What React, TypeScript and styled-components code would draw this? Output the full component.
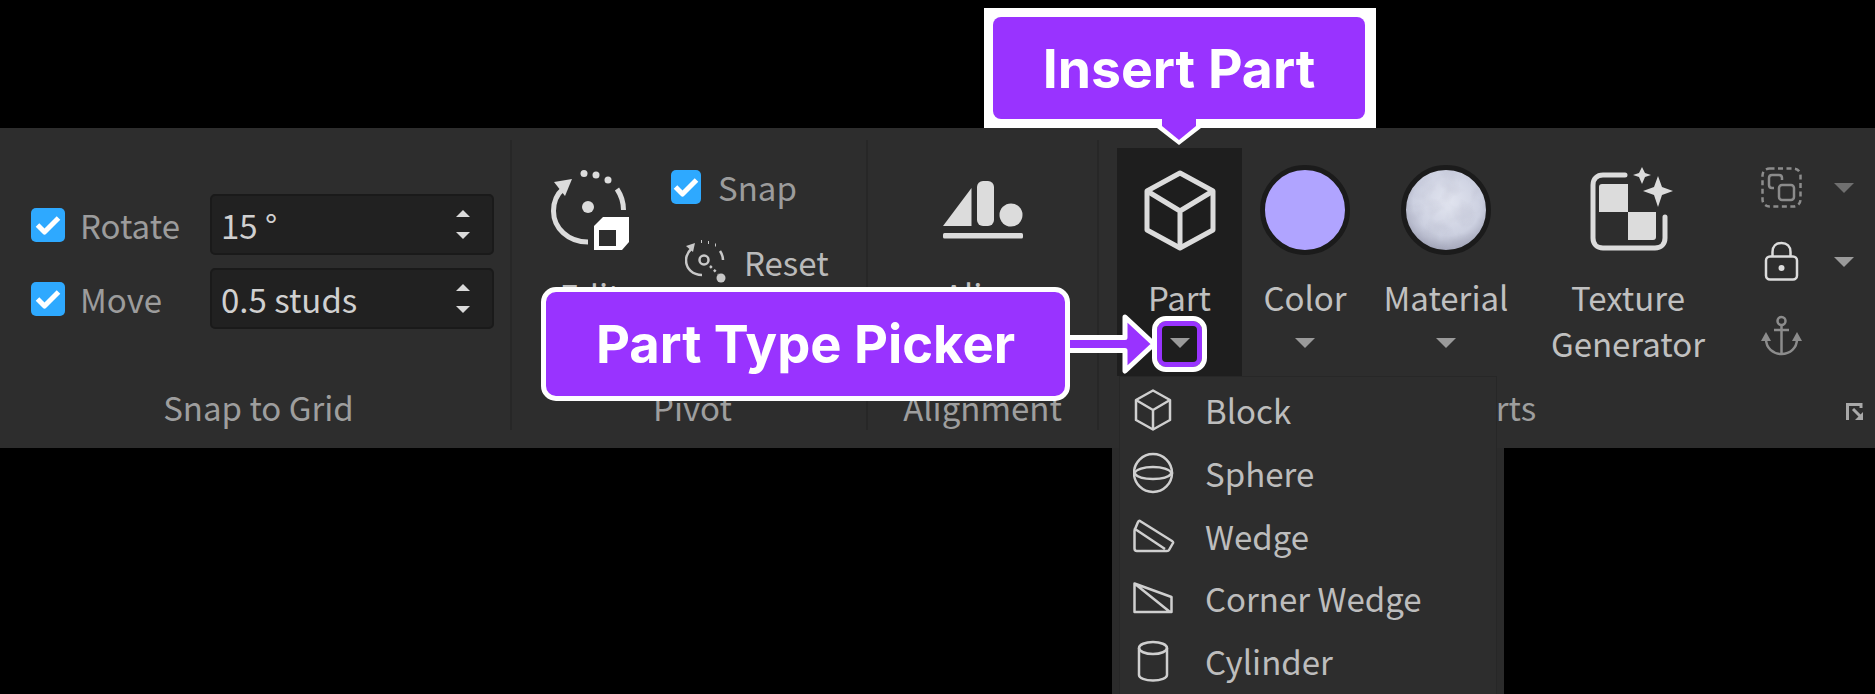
import styled, { createGlobalStyle } from 'styled-components';

const PURPLE = '#9933ff';
const ICON = '#dcdcdc';
const DIM_ICON = '#8c8c8c';

const GlobalStyle = createGlobalStyle`
  html, body {
    margin: 0;
    background: #000;
  }
  body {
    font-family: 'Noto Sans CJK SC', 'Noto Sans', sans-serif;
    overflow: hidden;
  }
`;

const Page = styled.div`
  position: relative;
  width: 1875px;
  height: 694px;
  padding-top: 128px;
  box-sizing: border-box;
  overflow: hidden;
`;

const Ribbon = styled.div`
  display: flex;
  height: 320px;
  padding-top: 12px;
  box-sizing: border-box;
  background: #2d2d2d;
`;

const Section = styled.section<{ $width?: number }>`
  display: flex;
  flex-direction: column;
  width: ${(p) => (p.$width ? `${p.$width}px` : 'auto')};
  flex: ${(p) => (p.$width ? 'none' : 1)};
  height: 290px;
  box-sizing: border-box;
  border-right: ${(p) => (p.$width ? '2px solid #272727' : '0')};
`;

const SectionBody = styled.div`
  display: flex;
  flex: 1;
  min-height: 0;
`;

const SectionLabel = styled.div<{ $offset?: number }>`
  height: 45px;
  line-height: 45px;
  font-size: 33px;
  text-align: center;
  color: #9e9e9e;
  padding-left: ${(p) => p.$offset ?? 0}px;
`;

const SnapForm = styled.div`
  display: flex;
  flex-direction: column;
  justify-content: center;
  gap: 13px;
  padding: 0 0 2px 31px;
`;

const FormRow = styled.div`
  display: flex;
  align-items: center;
`;

const CheckLabel = styled.span<{ $width?: number; $gap?: number }>`
  font-size: 33px;
  line-height: 34px;
  color: #9c9c9c;
  margin-left: ${(p) => p.$gap ?? 15}px;
  width: ${(p) => (p.$width ? `${p.$width}px` : 'auto')};
`;

const Box = styled.span<{ $width?: number }>`
  display: flex;
  align-items: center;
  justify-content: center;
  flex: none;
  width: ${(p) => p.$width ?? 34}px;
  height: 34px;
  border-radius: 5px;
  background: #2ea9ff;
`;

const NumberField = styled.div`
  display: flex;
  align-items: center;
  justify-content: space-between;
  width: 284px;
  height: 61px;
  box-sizing: border-box;
  padding: 0 22px 0 9px;
  border: 2px solid #1a1a1a;
  border-radius: 5px;
  background: #212121;
  font-size: 33px;
  color: #d0d0d0;
`;

const Stepper = styled.div`
  display: flex;
  flex-direction: column;
  gap: 15px;
`;

const Triangle = styled.span<{ $up?: boolean; $width?: number; $color?: string }>`
  display: block;
  width: 0;
  height: 0;
  border-left: ${(p) => (p.$width ?? 20) / 2}px solid transparent;
  border-right: ${(p) => (p.$width ?? 20) / 2}px solid transparent;
  ${(p) => (p.$up ? 'border-bottom' : 'border-top')}: ${(p) => (p.$width ?? 20) / 2}px solid ${(p) => p.$color ?? '#9a9a9a'};
`;

const Tool = styled.div<{ $width: number; $left?: number; $active?: boolean }>`
  display: flex;
  flex-direction: column;
  align-items: center;
  flex: none;
  width: ${(p) => p.$width}px;
  margin-left: ${(p) => p.$left ?? 0}px;
  padding-top: 22px;
  height: 228px;
  box-sizing: border-box;
  background: ${(p) => (p.$active ? '#1e1e1e' : 'transparent')};
`;

const ToolIcon = styled.div<{ $shift?: number }>`
  display: flex;
  align-items: center;
  justify-content: center;
  height: 80px;
  flex: none;
  margin-left: ${(p) => p.$shift ?? 0}px;
`;

const ToolLabel = styled.div`
  margin-top: 24px;
  font-size: 33px;
  line-height: 46px;
  text-align: center;
  color: #c0c0c0;
  white-space: pre-line;
`;

const ToolCaret = styled.div`
  margin-top: 18px;
`;

const PartsRow = styled(SectionBody)`
  padding-top: 8px;
`;

const PivotTool = styled(Tool)`
  padding-top: 30px;
`;

const RaisedLabel = styled(ToolLabel)`
  margin-top: 22px;
`;

const PivotOptions = styled.div`
  display: flex;
  flex-direction: column;
  padding-top: 30px;
  margin-left: 42px;
`;

const ResetRow = styled(FormRow)`
  margin-top: 36px;
  padding-left: 14px;
`;

const ResetLabel = styled(CheckLabel)`
  margin-left: 18px;
  color: #bababa;
`;

const Swatch = styled.div`
  width: 80px;
  height: 80px;
  flex: none;
  border-radius: 50%;
  background: #b0a4ff;
  border: 5px solid #1b1b1b;
`;

const SmallTools = styled.div`
  display: flex;
  flex-direction: column;
  gap: 33px;
  margin-left: 29px;
  padding-top: 19px;
`;

const SmallTool = styled.div`
  display: flex;
  align-items: center;
  gap: 32px;
  height: 41px;
`;

const CornerIcon = styled.svg`
  position: absolute;
  left: 1846px;
  top: 403px;
`;

const MenuSkirt = styled.div`
  position: absolute;
  left: 1112px;
  top: 448px;
  bottom: 0;
  width: 392px;
  background: #2b2b2b;
`;

const Menu = styled.div`
  position: absolute;
  left: 1120px;
  top: 377px;
  bottom: 0;
  width: 376px;
  padding: 2px 0 0 13px;
  box-sizing: border-box;
  background: #2d2d2d;
  box-shadow: 0 0 0 1px #272727;
`;

const MenuItem = styled.div`
  display: flex;
  align-items: center;
  gap: 30px;
  height: 62.7px;
  font-size: 33px;
  color: #bdbdbd;
`;

const MenuIcon = styled.svg`
  flex: none;
  width: 42px;
  height: 42px;
`;

const Callout = styled.div<{ $size: number }>`
  display: flex;
  align-items: center;
  justify-content: center;
  position: absolute;
  box-sizing: border-box;
  background: ${PURPLE};
  color: #fff;
  font-family: 'Inter', 'Noto Sans', sans-serif;
  font-weight: 700;
  font-size: ${(p) => p.$size}px;
`;

const InsertPlate = styled.div`
  position: absolute;
  left: 984px;
  top: 8px;
  width: 392px;
  height: 120px;
  background: #fff;
`;

const InsertCallout = styled(Callout)`
  left: 993px;
  top: 17px;
  width: 372px;
  height: 102px;
  border-radius: 8px;
`;

const Pointer = styled.svg`
  position: absolute;
  left: 1153px;
  top: 115px;
`;

const PickerCallout = styled(Callout)`
  left: 541px;
  top: 287px;
  width: 529px;
  height: 114px;
  border: 5px solid #fff;
  border-radius: 15px;
`;

const ConnectorArrow = styled.svg`
  position: absolute;
  left: 1066px;
  top: 314px;
`;

const CaretHighlight = styled.div`
  position: absolute;
  left: 1152px;
  top: 316px;
  width: 55px;
  height: 56px;
  box-sizing: border-box;
  border: 5px solid #fff;
  border-radius: 14px;
  box-shadow: inset 0 0 0 5px ${PURPLE};
`;

const Check = () => (
  <svg width="26" height="20" viewBox="0 0 26 20" fill="none">
    <path d="M2.500 10 9.500 17 23.500 3" stroke="#fff" strokeWidth="5" strokeLinejoin="round" />
  </svg>
);

const CubeIcon = () => (
  <svg width="72" height="81" viewBox="0 0 72 81" fill="none" stroke={ICON} strokeWidth="5" strokeLinejoin="round">
    <path d="M36 3 69 21V60L36 78 3 60V21Z" />
    <path d="M3 21 36 41 69 21M36 41V78" />
  </svg>
);

const EditPivotIcon = () => (
  <svg width="78" height="80" viewBox="0 0 78 80" fill="none">
    <path d="M12 19C5 25 2.500 32 2.500 41 2.500 58 17 72 37 72" stroke={ICON} strokeWidth="5" />
    <path d="M66 19C70 25 72.500 32 72.500 40" stroke={ICON} strokeWidth="5" />
    <path d="M21 9 3 12 14 26Z" fill={ICON} />
    <circle cx="33" cy="3.500" r="3.500" fill={ICON} />
    <circle cx="45" cy="5" r="3.500" fill={ICON} />
    <circle cx="57" cy="10" r="3.500" fill={ICON} />
    <circle cx="37" cy="37" r="6" fill={ICON} />
    <path d="M52 47H78V72L71 80H43V56Z" fill="#fff" />
    <rect x="48" y="60" width="17" height="16" fill="#2d2d2d" />
  </svg>
);

const ResetIcon = () => (
  <svg width="41" height="43" viewBox="0 0 41 43" fill="none" stroke="#c8c8c8">
    <path d="M7 8C3 12 1 16 1 20 1 29 8 35 17 35" strokeWidth="2.500" />
    <path d="M35 11C37 14 38 17 38 20" strokeWidth="2.500" />
    <path d="M10 3 1 6 8 12Z" fill="#c8c8c8" strokeWidth="0" />
    <path d="M16 1.500H17M23 2.500H24M30 5H31" strokeWidth="3" />
    <circle cx="19" cy="20" r="4.500" strokeWidth="2.500" />
    <path d="M25 26 33 34" strokeWidth="2.500" strokeDasharray="2.500 3" />
    <circle cx="36" cy="38" r="4.500" fill="#c8c8c8" strokeWidth="0" />
  </svg>
);

const AlignIcon = () => (
  <svg width="80" height="58" viewBox="0 0 80 58" fill={ICON}>
    <path d="M28.500 7V45H0Z" />
    <rect x="34" y="0" width="17" height="45" rx="6" />
    <circle cx="68" cy="34" r="11.500" />
    <rect x="0" y="52" width="80" height="5.500" rx="1.500" />
  </svg>
);

const MaterialBall = () => (
  <svg width="90" height="90" viewBox="0 0 90 90" style={{ flex: 'none' }}>
    <defs>
      <radialGradient id="ball" cx="52%" cy="40%" r="62%">
        <stop offset="0" stopColor="#e2e5f0" />
        <stop offset="0.65" stopColor="#ccd0e0" />
        <stop offset="0.9" stopColor="#a8abbe" />
        <stop offset="1" stopColor="#8b8d9e" />
      </radialGradient>
      <filter id="bumps" x="0" y="0" width="100%" height="100%">
        <feTurbulence type="fractalNoise" baseFrequency="0.07" numOctaves="2" seed="4" />
        <feColorMatrix values="0 0 0 0 0.3  0 0 0 0 0.3  0 0 0 0 0.4  1.6 0 0 0 -0.6" />
      </filter>
      <clipPath id="ballClip">
        <circle cx="45" cy="45" r="40" />
      </clipPath>
    </defs>
    <circle cx="45" cy="45" r="42.500" fill="url(#ball)" stroke="#1b1b1b" strokeWidth="5" />
    <rect x="5" y="5" width="80" height="80" filter="url(#bumps)" clipPath="url(#ballClip)" opacity="0.18" />
  </svg>
);

const TextureIcon = () => (
  <svg width="87" height="86" viewBox="0 0 87 86" fill="none">
    <path d="M37 8H15C9 8 5 12 5 18V71C5 77 9 81 15 81H67C73 81 77 77 77 71V50" stroke={ICON} strokeWidth="5" strokeLinecap="round" />
    <path d="M14 17H40V45H11V20C11 18 12 17 14 17Z" fill={ICON} />
    <path d="M40 45H68V70C68 72 67 73 65 73H40Z" fill={ICON} />
    <path d="M54 0 57 6 63 8 57 10 54 17 51 10 45 8 51 6Z" fill={ICON} />
    <path d="M70 9 74 20 85 24 74 28 70 40 66 28 55 24 66 20Z" fill={ICON} />
  </svg>
);

const SelectIcon = () => (
  <svg width="41" height="41" viewBox="0 0 41 41" fill="none" stroke={DIM_ICON}>
    <rect x="1.500" y="1.500" width="38" height="38" rx="7" strokeWidth="2.500" strokeDasharray="5 3.500" />
    <path d="M13 21H11C9 21 8 20 8 18V11C8 9 9 8 11 8H18C20 8 21 9 21 11V13" strokeWidth="2.500" />
    <rect x="18" y="18" width="15" height="15" rx="3" strokeWidth="2.500" />
  </svg>
);

const LockIcon = () => (
  <svg width="41" height="41" viewBox="0 0 41 41" fill="none" stroke={ICON}>
    <rect x="5" y="15.500" width="31" height="23" rx="4" strokeWidth="2.500" />
    <path d="M11.500 15V11C11.500 5.500 15 2 20.500 2 26 2 29.500 5.500 29.500 11V15" strokeWidth="2.500" />
    <circle cx="20.500" cy="27" r="3" fill={ICON} strokeWidth="0" />
  </svg>
);

const AnchorIcon = () => (
  <svg width="41" height="41" viewBox="0 0 41 41" fill="none" stroke={DIM_ICON}>
    <circle cx="20.500" cy="6" r="4" strokeWidth="2.500" />
    <path d="M20.500 10V39M13 15H28" strokeWidth="2.500" />
    <path d="M5 24C5 33 12 39 20.500 39 29 39 36 33 36 24" strokeWidth="2.500" />
    <path d="M5 17 0 26H10ZM36 17 31 26H41Z" fill={DIM_ICON} strokeWidth="0" />
  </svg>
);

const PartRow = ({ label, icon }: { label: string; icon: React.ReactNode }) => (
  <MenuItem>
    <MenuIcon viewBox="0 0 42 42" fill="none" stroke="#cfcfcf" strokeWidth="2.500" strokeLinejoin="round">
      {icon}
    </MenuIcon>
    {label}
  </MenuItem>
);

export default function App() {
  return (
    <Page>
      <GlobalStyle />
      <Ribbon>
        <Section $width={512}>
          <SectionBody>
            <SnapForm>
              <FormRow>
                <Box><Check /></Box>
                <CheckLabel $width={130}>Rotate</CheckLabel>
                <NumberField>
                  15 °
                  <Stepper>
                    <Triangle $up $width={14} $color="#dadada" />
                    <Triangle $width={14} $color="#dadada" />
                  </Stepper>
                </NumberField>
              </FormRow>
              <FormRow>
                <Box><Check /></Box>
                <CheckLabel $width={130}>Move</CheckLabel>
                <NumberField>
                  0.5 studs
                  <Stepper>
                    <Triangle $up $width={14} $color="#dadada" />
                    <Triangle $width={14} $color="#dadada" />
                  </Stepper>
                </NumberField>
              </FormRow>
            </SnapForm>
          </SectionBody>
          <SectionLabel $offset={7}>Snap to Grid</SectionLabel>
        </Section>
        <Section $width={356}>
          <SectionBody>
            <PivotTool $width={78} $left={39}>
              <ToolIcon><EditPivotIcon /></ToolIcon>
              <RaisedLabel>Edit</RaisedLabel>
            </PivotTool>
            <PivotOptions>
              <FormRow>
                <Box $width={30}><Check /></Box>
                <CheckLabel $gap={17}>Snap</CheckLabel>
              </FormRow>
              <ResetRow>
                <ResetIcon />
                <ResetLabel>Reset</ResetLabel>
              </ResetRow>
            </PivotOptions>
          </SectionBody>
          <SectionLabel $offset={7}>Pivot</SectionLabel>
        </Section>
        <Section $width={231}>
          <SectionBody>
            <PivotTool $width={229}>
              <ToolIcon><AlignIcon /></ToolIcon>
              <RaisedLabel>Align</RaisedLabel>
            </PivotTool>
          </SectionBody>
          <SectionLabel>Alignment</SectionLabel>
        </Section>
        <Section>
          <PartsRow>
            <Tool $width={125} $left={18} $active>
              <ToolIcon><CubeIcon /></ToolIcon>
              <ToolLabel>Part</ToolLabel>
              <ToolCaret><Triangle /></ToolCaret>
            </Tool>
            <Tool $width={126}>
              <ToolIcon><Swatch /></ToolIcon>
              <ToolLabel>Color</ToolLabel>
              <ToolCaret><Triangle /></ToolCaret>
            </Tool>
            <Tool $width={156}>
              <ToolIcon><MaterialBall /></ToolIcon>
              <ToolLabel>Material</ToolLabel>
              <ToolCaret><Triangle /></ToolCaret>
            </Tool>
            <Tool $width={208}>
              <ToolIcon $shift={6}><TextureIcon /></ToolIcon>
              <ToolLabel>{'Texture\nGenerator'}</ToolLabel>
            </Tool>
            <SmallTools>
              <SmallTool><SelectIcon /><Triangle $color="#6f6f6f" /></SmallTool>
              <SmallTool><LockIcon /><Triangle /></SmallTool>
              <SmallTool><AnchorIcon /></SmallTool>
            </SmallTools>
          </PartsRow>
          <SectionLabel $offset={20}>Parts</SectionLabel>
        </Section>
      </Ribbon>

      <CornerIcon width="18" height="18" viewBox="0 0 18 18" fill="none" stroke="#a8a8a8">
        <path d="M1.500 17V1.500H15V5" strokeWidth="3" />
        <path d="M7 6 14 13" strokeWidth="3" />
        <path d="M17 9V17H9Z" fill="#a8a8a8" strokeWidth="0" />
      </CornerIcon>

      <MenuSkirt />
      <Menu>
        <PartRow
          label="Block"
          icon={
            <>
              <path d="M20 1.500 37 11V31L20 40.500 3 31V11Z" />
              <path d="M3 11 20 21 37 11M20 21V40.500" />
            </>
          }
        />
        <PartRow
          label="Sphere"
          icon={
            <>
              <circle cx="20" cy="21" r="19" />
              <path d="M1 21C7 13 33 13 39 21 33 29 7 29 1 21Z" />
            </>
          }
        />
        <PartRow
          label="Wedge"
          icon={
            <path d="M7 6 39 26Q40.500 27 40 28L36 35Q35.500 36 34 36H4Q1.500 36 1.500 33.500V16Q1.500 14 2.500 13L5 7Q5.500 5.500 7 6ZM2 14 32 34" />
          }
        />
        <PartRow
          label="Corner Wedge"
          icon={<path d="M1.500 6.500 38.500 20V35H1.500ZM1.500 6.500 37 35" />}
        />
        <PartRow
          label="Cylinder"
          icon={
            <>
              <ellipse cx="20" cy="8" rx="14" ry="6" />
              <path d="M6 8V35C6 38 12 40.500 20 40.500 28 40.500 34 38 34 35V8" />
            </>
          }
        />
      </Menu>

      <InsertPlate />
      <Pointer width="52" height="32" viewBox="0 0 52 32" fill={PURPLE}>
        <path d="M4 13H48L26 30Z" fill="#fff" />
        <path d="M9 4H43V11L26 25 9 11Z" />
      </Pointer>
      <InsertCallout $size={53.5}>Insert Part</InsertCallout>

      <ConnectorArrow width="92" height="60" viewBox="0 0 92 60" fill={PURPLE} stroke="#fff" strokeWidth="5" strokeLinejoin="round">
        <path d="M0 23.500H59V3L88 30 59 57V36.500H0Z" />
      </ConnectorArrow>
      <CaretHighlight />
      <PickerCallout $size={52.5}>Part Type Picker</PickerCallout>
    </Page>
  );
}
